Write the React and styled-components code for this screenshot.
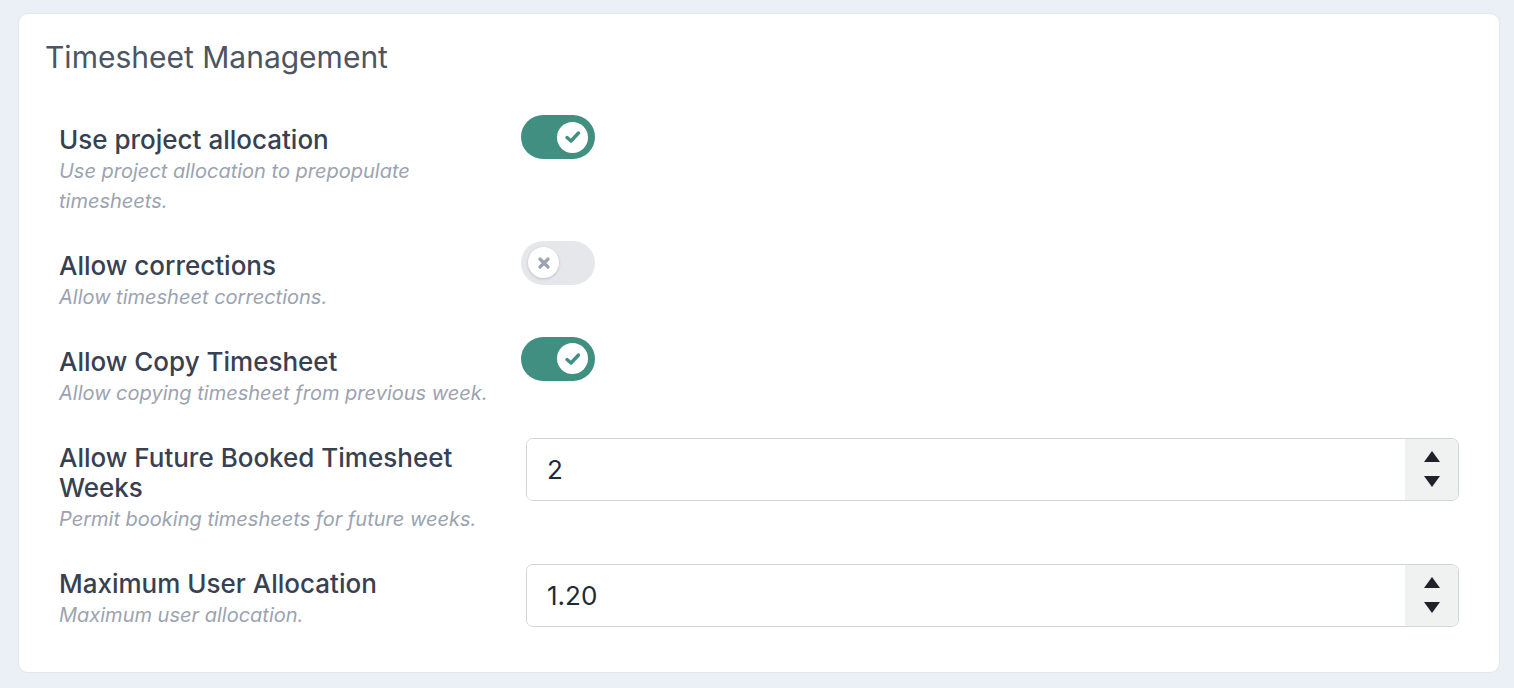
import React, { useState } from 'react'
import styled, { createGlobalStyle } from 'styled-components'

const GlobalStyle = createGlobalStyle`
  * { box-sizing: border-box; }
  body {
    margin: 0;
    background: #ebf0f7;
    font-family: Inter, "Noto Sans", sans-serif;
  }
`

const Page = styled.div`
  padding: 13px 14px 14px 18px;
  min-height: 688px;
`

const Card = styled.section`
  background: #fff;
  border: 1px solid #e3e6ea;
  border-radius: 10px;
  padding: 25px 40px 42px 26px;
`

const Title = styled.h2`
  margin: 0 0 50px;
  font-size: 30px;
  line-height: 36px;
  font-weight: 400;
  color: #4b5563;
`

const Rows = styled.div`
  display: flex;
  flex-direction: column;
  gap: 34.5px;
  padding-left: 14px;
`

const Row = styled.div`
  display: grid;
  grid-template-columns: 440px 1fr;
  column-gap: 22px;
  align-items: start;
`

const Label = styled.div`
  font-size: 26px;
  line-height: 30px;
  font-weight: 500;
  color: #374151;
`

const Desc = styled.div`
  margin-top: 2px;
  font-size: 20px;
  line-height: 29.5px;
  font-style: italic;
  color: #9ca3af;
`

const Track = styled.button`
  margin-top: -10px;
  width: 74px;
  height: 44px;
  border: none;
  border-radius: 22px;
  padding: 0 7px;
  display: flex;
  align-items: center;
  justify-content: ${p => (p.$on ? 'flex-end' : 'flex-start')};
  background: ${p => (p.$on ? '#408f80' : '#e5e7eb')};
  cursor: pointer;
`

const Knob = styled.span`
  width: 31px;
  height: 31px;
  border-radius: 50%;
  background: #fff;
  display: flex;
  align-items: center;
  justify-content: center;
  box-shadow: ${p => (p.$on ? 'none' : '0 1px 3px rgba(0,0,0,0.18)')};
`

const NumberBox = styled.div`
  margin-top: -5px;
  margin-left: 5px;
  height: 63px;
  display: flex;
  border: 1.5px solid #d1d5db;
  border-radius: 7px;
  overflow: hidden;
`

const NumberField = styled.input`
  flex: 1;
  border: none;
  outline: none;
  padding: 0 20px;
  font-family: inherit;
  font-size: 26px;
  color: #1f2937;
  background: #fff;
`

const Spinner = styled.div`
  width: 53px;
  background: #f0f2f1;
  display: flex;
  flex-direction: column;
  align-items: center;
  justify-content: center;
  gap: 14px;
`

const Arrow = styled.span`
  width: 0;
  height: 0;
  border-left: 8px solid transparent;
  border-right: 8px solid transparent;
  ${p => (p.$down ? 'border-top: 11px solid #1f2329;' : 'border-bottom: 11px solid #1f2329;')}
`

function Check() {
  return (
    <svg width="20" height="20" viewBox="0 0 20 20" fill="none">
      <path d="M4 10.5 L8 14 L15.5 6" stroke="#408f80" strokeWidth="3.4" strokeLinecap="round" strokeLinejoin="round" />
    </svg>
  )
}

function Cross() {
  return (
    <svg width="14" height="14" viewBox="0 0 14 14" fill="none">
      <path d="M3 3 L11 11 M11 3 L3 11" stroke="#9ca3af" strokeWidth="3.2" strokeLinecap="round" />
    </svg>
  )
}

function Toggle({ initial }) {
  const [on, setOn] = useState(initial)
  return (
    <Track $on={on} onClick={() => setOn(!on)} aria-pressed={on}>
      <Knob $on={on}>{on ? <Check /> : <Cross />}</Knob>
    </Track>
  )
}

function NumberInput({ value }) {
  return (
    <NumberBox>
      <NumberField defaultValue={value} />
      <Spinner>
        <Arrow />
        <Arrow $down />
      </Spinner>
    </NumberBox>
  )
}

const settings = [
  { label: 'Use project allocation', desc: 'Use project allocation to prepopulate timesheets.', toggle: true },
  { label: 'Allow corrections', desc: 'Allow timesheet corrections.', toggle: false },
  { label: 'Allow Copy Timesheet', desc: 'Allow copying timesheet from previous week.', toggle: true },
  { label: 'Allow Future Booked Timesheet Weeks', desc: 'Permit booking timesheets for future weeks.', number: '2' },
  { label: 'Maximum User Allocation', desc: 'Maximum user allocation.', number: '1.20' },
]

export default function App() {
  return (
    <Page>
      <GlobalStyle />
      <Card>
        <Title>Timesheet Management</Title>
        <Rows>
          {settings.map(s => (
            <Row key={s.label}>
              <div>
                <Label>{s.label}</Label>
                <Desc>{s.desc}</Desc>
              </div>
              {s.number !== undefined ? <NumberInput value={s.number} /> : <Toggle initial={s.toggle} />}
            </Row>
          ))}
        </Rows>
      </Card>
    </Page>
  )
}
